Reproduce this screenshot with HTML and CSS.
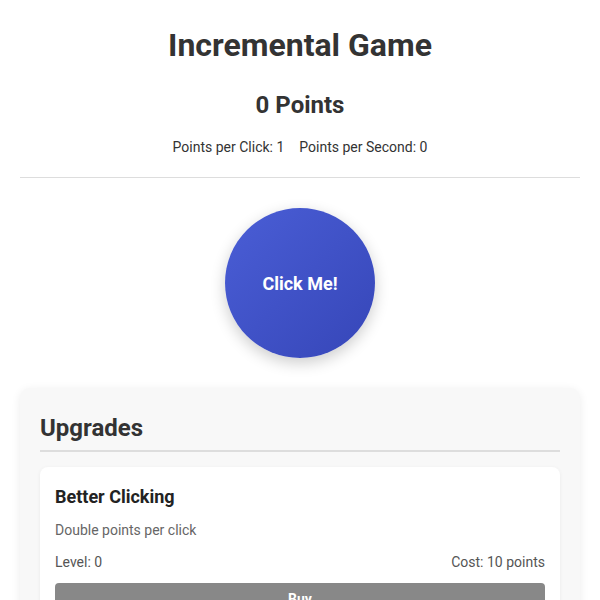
FILE: index.html
```html
<!DOCTYPE html>
<html>
<head>
<meta charset="UTF-8">
<title>Incremental Game</title>
<link rel="stylesheet" href="styles.css">
</head>
<body>
	<div class="header">
		<h1>Incremental Game</h1>
		<div class="points"><span id="points">0</span> Points</div>
		<div class="stats">
			<span>Points per Click: <span id="ppc">1</span></span>
			<span>Points per Second: <span id="pps">0</span></span>
		</div>
	</div>
	<div class="click-area">
		<button class="click-btn" id="clickBtn">Click Me!</button>
	</div>
	<div class="upgrades">
		<h2>Upgrades</h2>
		<div class="upgrade">
			<h3>Better Clicking</h3>
			<p class="desc">Double points per click</p>
			<div class="info">
				<span>Level: <span id="level">0</span></span>
				<span>Cost: <span id="cost">10</span> points</span>
			</div>
			<button class="buy" id="buyBtn" disabled>Buy</button>
		</div>
	</div>
	<script>
	var points = 0, ppc = 1, level = 0, cost = 10;
	var update = function() {
		document.getElementById('points').innerHTML = points;
		document.getElementById('ppc').innerHTML = ppc;
		document.getElementById('level').innerHTML = level;
		document.getElementById('cost').innerHTML = cost;
		document.getElementById('buyBtn').disabled = points < cost;
	}
	document.getElementById('clickBtn').onclick = function() {
		points += ppc;
		update();
	}
	document.getElementById('buyBtn').onclick = function() {
		if (points < cost) return;
		points -= cost;
		level++;
		ppc *= 2;
		cost *= 2;
		update();
	}
	</script>
</body>
</html>
```

FILE: styles.css
```css
body {
	margin: 0;
	padding: 20px;
	font-family: Roboto, "Liberation Sans", sans-serif;
	color: #333;
	background: #fff;
}
.header {
	text-align: center;
	border-bottom: 1px solid #ddd;
	padding-bottom: 22px;
}
.header h1 {
	font-size: 32px;
	margin: 6px 0 27px;
}
.points {
	font-size: 24px;
	font-weight: bold;
	margin-bottom: 20px;
}
.stats {
	font-size: 14px;
	display: flex;
	justify-content: center;
	gap: 15px;
}
.click-area {
	display: flex;
	justify-content: center;
	padding: 30px 0;
}
.click-btn {
	width: 150px;
	height: 150px;
	border-radius: 50%;
	border: none;
	background: linear-gradient(135deg, #4a5ed6 0%, #3646b8 100%);
	color: #fff;
	font-family: inherit;
	font-size: 18px;
	font-weight: bold;
	box-shadow: 0 5px 15px rgba(0, 0, 0, 0.2);
	cursor: pointer;
}
.upgrades {
	background: #f8f8f8;
	border-radius: 10px;
	padding: 26px 20px 20px;
	box-shadow: 0 2px 10px rgba(0, 0, 0, 0.08);
}
.upgrades h2 {
	font-size: 24px;
	margin: 0 0 15px;
	padding-bottom: 8px;
	border-bottom: 2px solid #ddd;
}
.upgrade {
	background: #fff;
	border-radius: 8px;
	padding: 19px 15px 15px;
	box-shadow: 0 1px 4px rgba(0, 0, 0, 0.06);
}
.upgrade h3 {
	font-size: 18px;
	margin: 0 0 15px;
	color: #222;
}
.desc {
	font-size: 14px;
	color: #666;
	margin: 0 0 16px;
}
.info {
	display: flex;
	justify-content: space-between;
	font-size: 14px;
	color: #555;
	margin-bottom: 13px;
}
.buy {
	width: 100%;
	padding: 8px;
	border: none;
	border-radius: 4px;
	background: #4a5ed6;
	color: #fff;
	font-family: inherit;
	font-size: 14px;
	font-weight: bold;
}
.buy:disabled {
	background: #888;
}
```
